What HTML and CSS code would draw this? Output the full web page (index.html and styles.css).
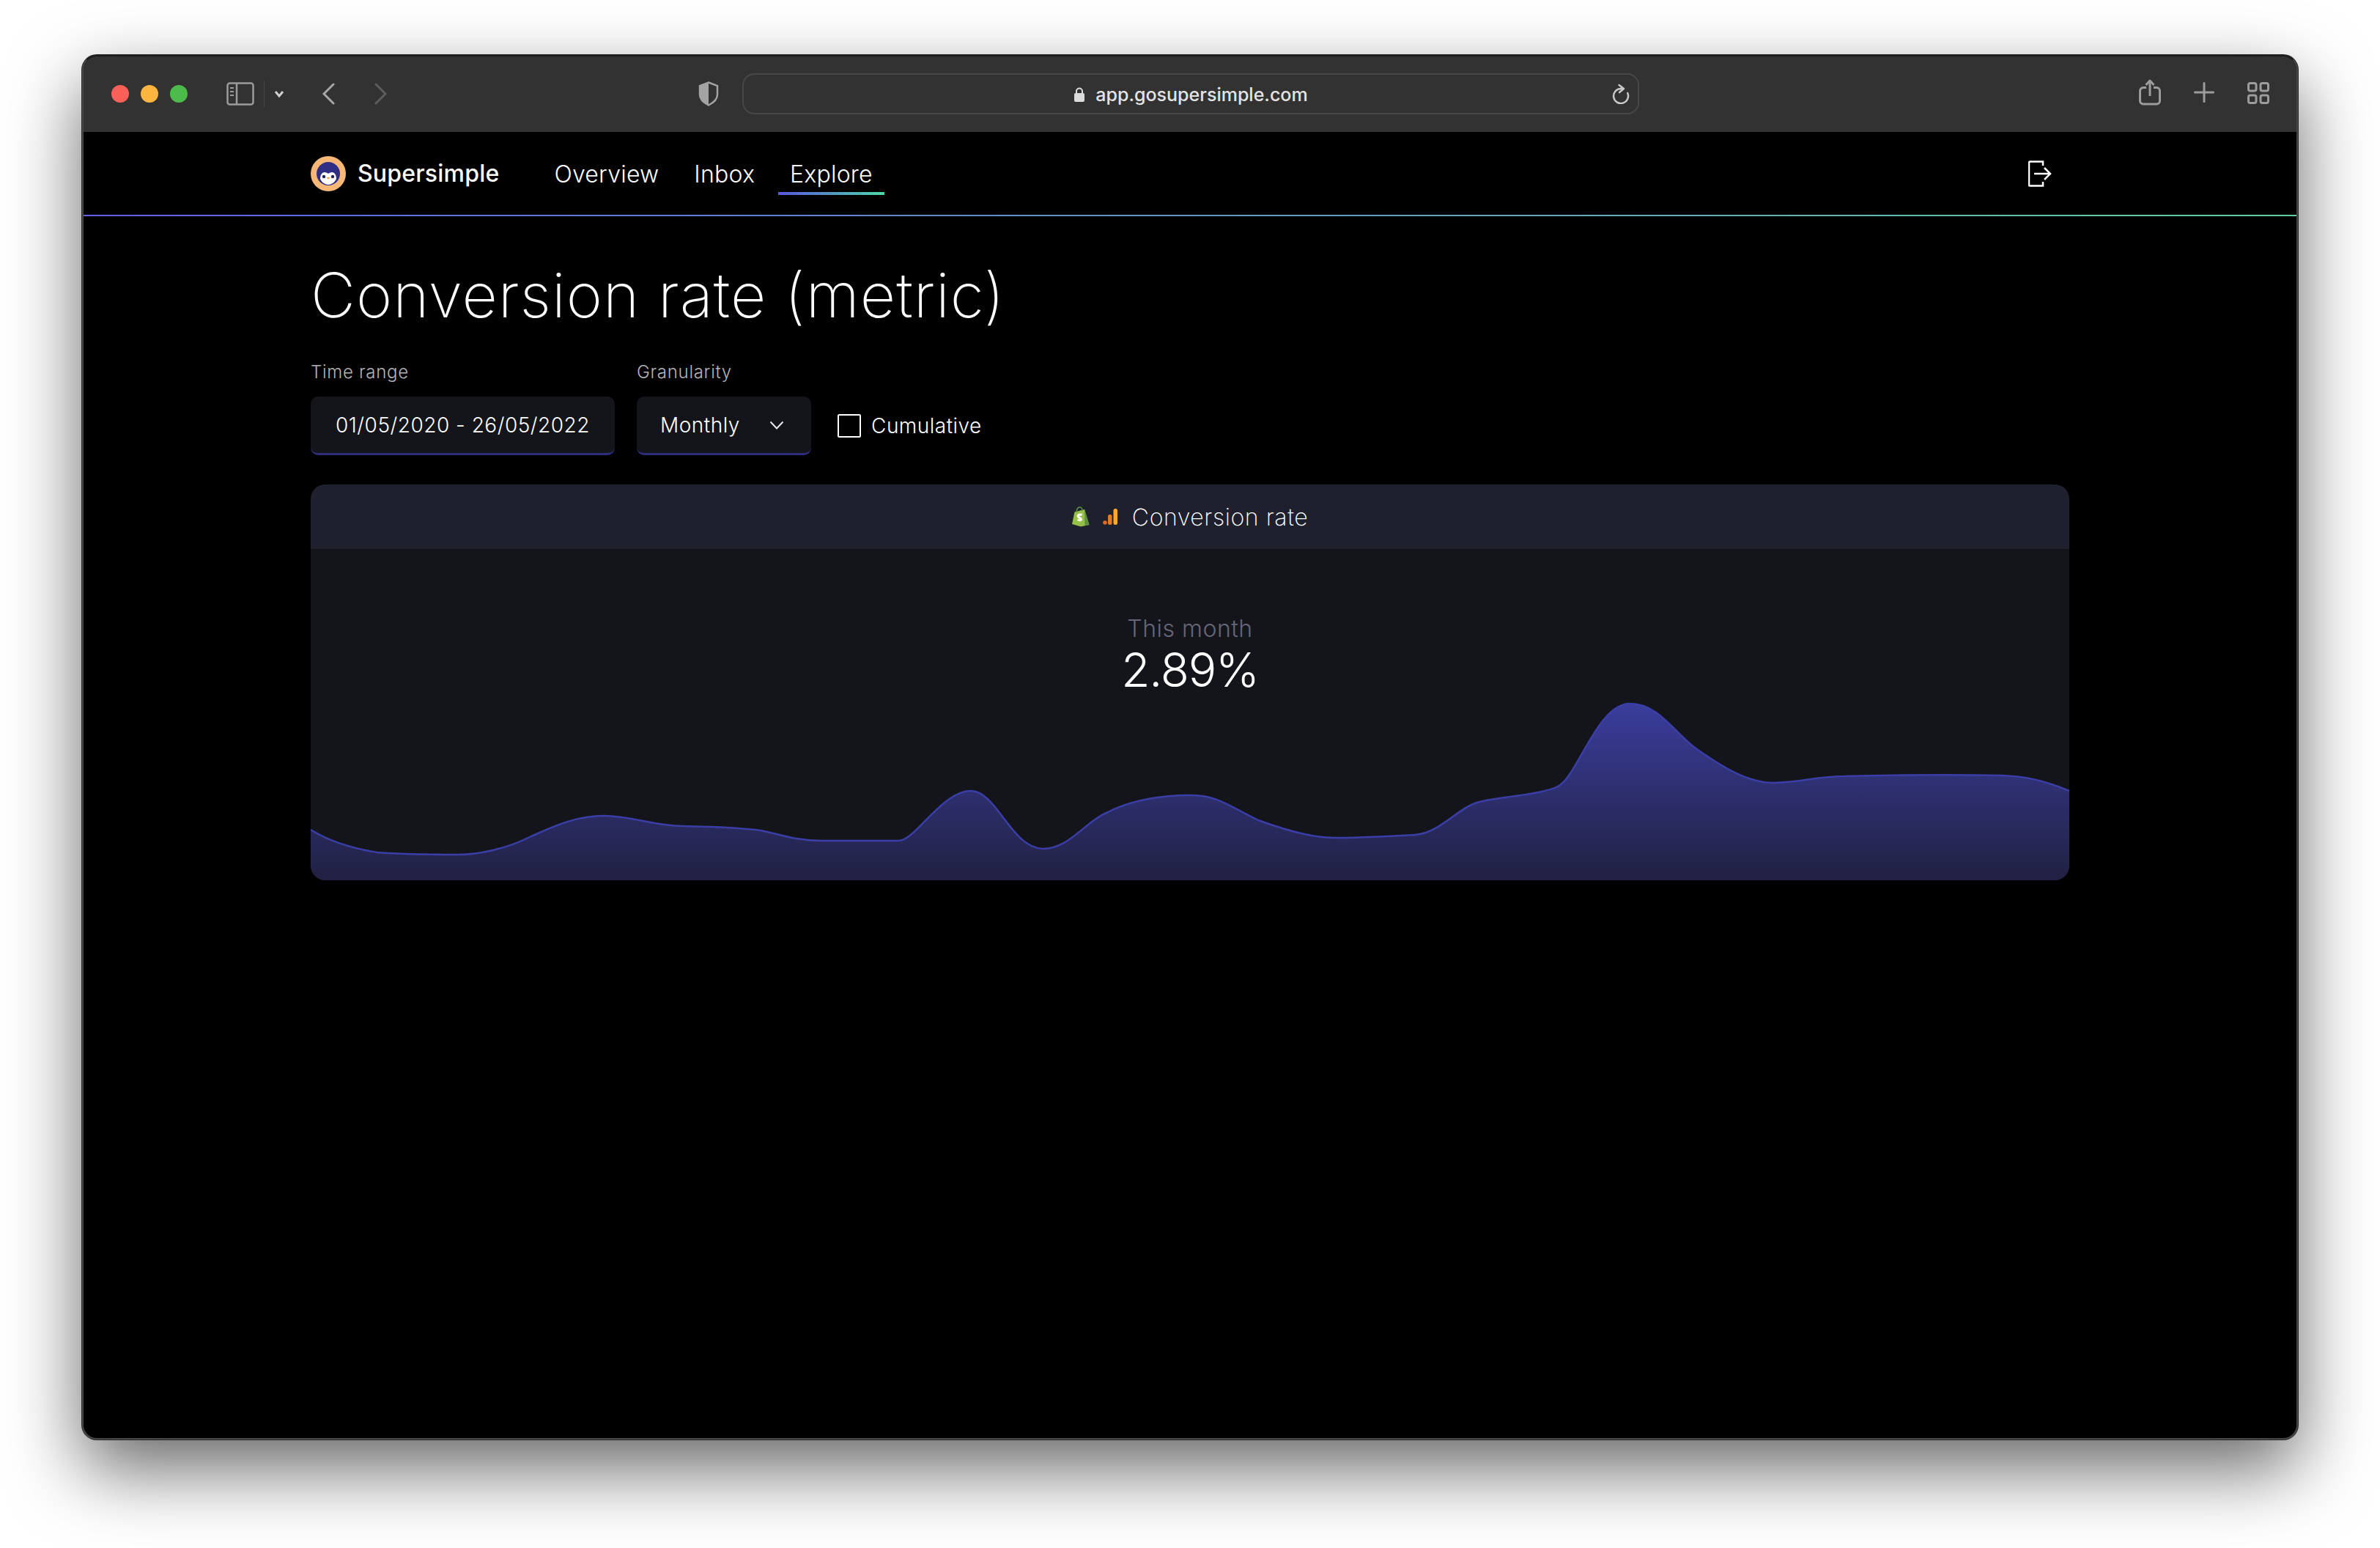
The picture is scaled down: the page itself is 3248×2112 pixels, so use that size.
FILE: index.html
```html
<!DOCTYPE html>
<html>
  <head>
    <meta charset="UTF-8">
    <title>Supersimple</title>
    <link rel="stylesheet" href="styles.css">
  </head>
  <body>
    <div class="window">
      <!-- browser chrome -->
      <div class="toolbar">
        <span class="dot dot-red"></span>
        <span class="dot dot-yellow"></span>
        <span class="dot dot-green"></span>

        <svg class="icon-sidebar" width="38" height="32" viewBox="0 0 38 32" fill="none" stroke="#9b9b9b" stroke-width="2.5">
          <rect x="1.5" y="1.5" width="35" height="29" rx="3"/>
          <path d="M14 2v28"/>
          <path d="M5 8h5M5 13h5M5 18h5" stroke-width="2"/>
        </svg>
        <span class="toolbar-sep"></span>
        <svg class="icon-caret" width="14" height="10" viewBox="0 0 14 10" fill="none" stroke="#cfcfcf" stroke-width="3">
          <path d="M2 2l5 6 5-6"/>
        </svg>
        <svg class="icon-back" width="18" height="30" viewBox="0 0 18 30" fill="none" stroke="#a6a6a6" stroke-width="3" stroke-linecap="round">
          <path d="M16 2L3 15l13 13"/>
        </svg>
        <svg class="icon-forward" width="18" height="30" viewBox="0 0 18 30" fill="none" stroke="#5c5c5c" stroke-width="3" stroke-linecap="round">
          <path d="M2 2l13 13L2 28"/>
        </svg>
        <svg class="icon-shield" width="28" height="34" viewBox="0 0 28 34">
          <path d="M14 1.500L26 6v12c0 6-5 11-12 14.500C7 29 2 24 2 18V6z" fill="none" stroke="#a3a3a3" stroke-width="2.500"/>
          <path d="M14 1.500V32.500C7 29 2 24 2 18V6z" fill="#a3a3a3"/>
        </svg>

        <div class="urlbar">
          <div class="url">
            <svg width="16" height="22" viewBox="0 0 16 22">
              <path d="M4 10V6.500a4 4 0 0 1 8 0V10" fill="none" stroke="#dcdcdc" stroke-width="2"/>
              <rect x="1" y="9" width="14" height="12" rx="2" fill="#dcdcdc"/>
            </svg>
            <span>app.gosupersimple.com</span>
          </div>
          <svg class="icon-reload" width="24" height="28" viewBox="0 0 24 28" fill="none" stroke="#c8c8c8" stroke-width="2.500" stroke-linecap="round" stroke-linejoin="round">
            <path d="M12 7A10 10 0 1 0 21.200 13"/>
            <path d="M12 7h3M9.500 2l6.500 5-6 5"/>
          </svg>
        </div>

        <div class="toolbar-right">
          <svg class="icon-share" width="30" height="36" viewBox="0 0 30 36" fill="none" stroke="#9c9c9c" stroke-width="3" stroke-linejoin="round">
            <path d="M10 11.500H6a4.500 4.500 0 0 0-4.500 4.500v13.500A4.500 4.500 0 0 0 6 34h18a4.500 4.500 0 0 0 4.500-4.500V16a4.500 4.500 0 0 0-4.500-4.500h-4"/>
            <path d="M15 23V2M9.500 8L15 2l5.500 6"/>
          </svg>
          <svg class="icon-plus" width="28" height="28" viewBox="0 0 28 28" stroke="#9c9c9c" stroke-width="3" stroke-linecap="round">
            <path d="M14 1.500v25M1.500 14h25"/>
          </svg>
          <svg class="icon-tabs" width="30" height="30" viewBox="0 0 30 30" fill="none" stroke="#9c9c9c" stroke-width="3">
            <rect x="1.500" y="1.500" width="10.500" height="10.500" rx="2.500"/>
            <rect x="18" y="1.500" width="10.500" height="10.500" rx="2.500"/>
            <rect x="1.500" y="18" width="10.500" height="10.500" rx="2.500"/>
            <rect x="18" y="18" width="10.500" height="10.500" rx="2.500"/>
          </svg>
        </div>
      </div>

      <!-- app nav -->
      <nav class="nav">
        <div class="nav-inner">
          <svg class="logo" width="48" height="48" viewBox="0 0 48 48">
            <circle cx="24" cy="24" r="24" fill="#f7b877"/>
            <circle cx="24" cy="24" r="16" fill="#2f2f86"/>
            <path d="M13 31c0-6 3-9 6-9 2 0 4 1 5 2 1-1 3-2 5-2 3 0 6 3 6 9-2 5-7 8-11 8s-9-3-11-8z" fill="#fff"/>
            <circle cx="18" cy="28" r="2.200" fill="#23235e"/>
            <circle cx="30" cy="28" r="2.200" fill="#23235e"/>
            <path d="M21.500 29h5L24 32z" fill="#f2a33a"/>
          </svg>
          <span class="brand">Supersimple</span>
          <a class="nav-link">Overview</a>
          <a class="nav-link">Inbox</a>
          <a class="nav-link active">Explore</a>
          <svg class="logout" width="32" height="36" viewBox="0 0 32 36" fill="none" stroke="#fff" stroke-width="2.500">
            <path d="M20 7V1.500H2a1 1 0 0 0-1 1v31a1 1 0 0 0 1 1h18V29"/>
            <path d="M8 18h22M22 10l8 8-8 8"/>
          </svg>
        </div>
      </nav>

      <main class="content">
        <h1>Conversion rate (metric)</h1>

        <div class="filters">
          <div class="field">
            <label>Time range</label>
            <div class="control control-date">01/05/2020 - 26/05/2022</div>
          </div>
          <div class="field">
            <label>Granularity</label>
            <div class="control control-select">
              Monthly
              <svg width="20" height="12" viewBox="0 0 20 12" fill="none" stroke="#e8e8e8" stroke-width="2">
                <path d="M1.500 1.500l8.500 9 8.500-9"/>
              </svg>
            </div>
          </div>
          <div class="check">
            <span class="checkbox"></span>
            <span>Cumulative</span>
          </div>
        </div>

        <section class="card">
          <div class="card-head">
            <svg class="icon-shopify" width="26" height="28" viewBox="0 0 26 28">
              <path d="M1 24L4.500 7.500 18 4l6.500 21-11.500 2.500z" fill="#95bf47"/>
              <path d="M18 4l6.500 21-6 1.300z" fill="#5e8e3e"/>
              <path d="M7 8c0-4 2-7 4.500-7S15 3 15 6" fill="none" stroke="#5e8e3e" stroke-width="1.500"/>
              <path d="M14.500 11.500c-3-1.300-5.500-.3-5.500 1.500 0 2.500 4.500 2.500 4.500 4.500 0 1.500-2.500 1.700-5 .5" fill="none" stroke="#fff" stroke-width="3"/>
            </svg>
            <svg class="icon-analytics" width="20" height="22" viewBox="0 0 20 22">
              <circle cx="3" cy="19" r="2.800" fill="#e06a1f"/>
              <rect x="7" y="8" width="5.500" height="14" rx="2.500" fill="#e37b25"/>
              <rect x="14.500" y="0" width="5.500" height="22" rx="2.500" fill="#f9ab2e"/>
            </svg>
            <span>Conversion rate</span>
          </div>
          <div class="stat">
            <div class="stat-label">This month</div>
            <div class="stat-value">2.89%</div>
          </div>
          <svg class="chart" width="2400" height="260" viewBox="424 940 2400 260">
            <defs>
              <linearGradient id="area" gradientUnits="userSpaceOnUse" x1="0" y1="959" x2="0" y2="1200">
                <stop offset="0" stop-color="#3a3d9c"/>
                <stop offset="1" stop-color="#212142"/>
              </linearGradient>
            </defs>
            <path fill="url(#area)" d="M424 1131 C448 1146 478 1156 515 1162 C540 1164 600 1165 626 1165 C650 1165 690 1158 725 1140 C755 1127 785 1112 824 1112 C860 1112 890 1125 930 1126 C960 1127 1000 1127 1038 1132 C1065 1137 1085 1146 1120 1146 L1226 1146 C1250 1146 1285 1078 1325 1078 C1360 1078 1380 1156 1423 1157 C1460 1157 1480 1120 1512 1107 C1545 1090 1590 1083 1628 1084 C1660 1084 1680 1100 1717 1118 C1750 1130 1790 1142 1819 1142 C1860 1142 1910 1139 1931 1138 C1965 1136 1990 1100 2019 1093 C2040 1087 2105 1083 2126 1072 C2152 1060 2180 959 2224 959 C2265 959 2285 1000 2317 1022 C2350 1045 2385 1067 2420 1067 C2455 1067 2480 1058 2517 1058 C2600 1056 2680 1056 2731 1057 C2765 1058 2790 1064 2824 1078 L2824 1200 L424 1200 Z"/>
            <path fill="none" stroke="#3b3ea6" stroke-width="2.500" d="M424 1131 C448 1146 478 1156 515 1162 C540 1164 600 1165 626 1165 C650 1165 690 1158 725 1140 C755 1127 785 1112 824 1112 C860 1112 890 1125 930 1126 C960 1127 1000 1127 1038 1132 C1065 1137 1085 1146 1120 1146 L1226 1146 C1250 1146 1285 1078 1325 1078 C1360 1078 1380 1156 1423 1157 C1460 1157 1480 1120 1512 1107 C1545 1090 1590 1083 1628 1084 C1660 1084 1680 1100 1717 1118 C1750 1130 1790 1142 1819 1142 C1860 1142 1910 1139 1931 1138 C1965 1136 1990 1100 2019 1093 C2040 1087 2105 1083 2126 1072 C2152 1060 2180 959 2224 959 C2265 959 2285 1000 2317 1022 C2350 1045 2385 1067 2420 1067 C2455 1067 2480 1058 2517 1058 C2600 1056 2680 1056 2731 1057 C2765 1058 2790 1064 2824 1078"/>
          </svg>
        </section>
      </main>
    </div>
  </body>
</html>
```

FILE: styles.css
```css
html, body {
  margin: 0;
  background: #fff;
}

body {
  width: 3248px;
  height: 2112px;
  padding: 75px 112px 0;
  box-sizing: border-box;
  overflow: hidden;
  font-family: Inter, "Noto Sans", sans-serif;
  color: #fff;
}

.window {
  width: 3024px;
  height: 1889px;
  box-sizing: border-box;
  background: #000;
  border-radius: 20px;
  border: 2px solid #474747;
  border-top-color: #1c1c1c;
  overflow: hidden;
  box-shadow: 0 0 0 1px #2a2a2a, 0 40px 100px rgba(0, 0, 0, 0.6);
}

/* Browser toolbar */
.toolbar {
  height: 103px;
  background: #323232;
  display: flex;
  align-items: center;
  padding-left: 38px;
  padding-bottom: 2px;
  box-sizing: border-box;
}

.dot {
  width: 24px;
  height: 24px;
  border-radius: 50%;
  margin-right: 16px;
}

.dot-red { background: #f96057; }
.dot-yellow { background: #fcb63f; }
.dot-green { background: #4cbb4a; margin-right: 0; }

.icon-sidebar { margin-left: 53px; }

.toolbar-sep {
  width: 1px;
  height: 36px;
  background: #454545;
  margin-left: 13px;
}

.icon-caret { margin-left: 13px; }
.icon-back { margin-left: 51px; }
.icon-forward { margin-left: 54px; }
.icon-shield { margin-left: 424px; }

.urlbar {
  width: 1224px;
  height: 56px;
  margin-left: 32px;
  box-sizing: border-box;
  border: 2px solid #474747;
  border-radius: 16px;
  display: flex;
  align-items: center;
  position: relative;
}

.url {
  flex: 1;
  display: flex;
  align-items: center;
  justify-content: center;
  gap: 14px;
  padding-top: 3px;
  font-size: 25px;
  font-weight: 500;
  color: #e4e4e4;
}

.icon-reload {
  position: absolute;
  right: 11px;
  top: 12px;
}

.toolbar-right {
  margin-left: auto;
  margin-right: 37px;
  display: flex;
  align-items: center;
  gap: 45px;
}

.icon-share { margin-bottom: 3px; }
.icon-plus { margin-bottom: 3px; }
.icon-tabs { margin-bottom: 1px; }

/* App nav */
.nav {
  height: 115px;
  box-sizing: border-box;
  border-bottom: 2px solid;
  border-image: linear-gradient(90deg, #6060e8, #62cda0) 1;
}

.nav-inner {
  width: 2400px;
  height: 113px;
  margin: 0 auto;
  display: flex;
  align-items: center;
}

.brand {
  margin-left: 16px;
  margin-right: 59px;
  font-size: 32px;
  font-weight: 500;
  letter-spacing: 0.2px;
}

.nav-link {
  padding: 0 16px;
  margin-right: 16px;
  height: 56px;
  line-height: 56px;
  font-size: 32px;
  font-weight: 300;
  letter-spacing: 0.2px;
  position: relative;
  top: 1px;
}

.nav-link.active::after {
  content: "";
  position: absolute;
  left: 0;
  right: 0;
  bottom: 0;
  height: 4px;
  background: linear-gradient(90deg, #5757e0, #4fd8a8);
}

.logout {
  margin-left: auto;
  margin-right: 24px;
}

/* Page content */
.content {
  width: 2400px;
  margin: 0 auto;
}

h1 {
  margin: 0;
  padding-top: 56px;
  font-size: 84px;
  line-height: 104px;
  font-weight: 200;
  letter-spacing: 1px;
}

.filters {
  display: flex;
  align-items: flex-end;
  gap: 30px;
  margin-top: 38px;
}

.field label {
  display: block;
  font-size: 24px;
  line-height: 30px;
  font-weight: 300;
  letter-spacing: 0.7px;
  color: #b4b4b8;
  margin-bottom: 18px;
}

.control {
  height: 80px;
  box-sizing: border-box;
  background: #14151a;
  border-bottom: 3px solid #2d2f7c;
  border-radius: 10px;
  font-size: 28px;
  font-weight: 300;
  letter-spacing: 0.5px;
  display: flex;
  align-items: center;
}

.control-date {
  width: 415px;
  justify-content: center;
}

.control-select {
  width: 238px;
  padding: 0 37px 0 32px;
  justify-content: space-between;
}

.check {
  height: 80px;
  margin-left: 6px;
  display: flex;
  align-items: center;
  gap: 14px;
  font-size: 28px;
  font-weight: 300;
  letter-spacing: 0.5px;
}

.checkbox {
  width: 32px;
  height: 32px;
  box-sizing: border-box;
  border: 2px solid #fff;
  border-radius: 2px;
}

/* Metric card */
.card {
  margin-top: 40px;
  background: #14151a;
  border-radius: 20px;
  overflow: hidden;
}

.card-head {
  height: 88px;
  background: #1f202e;
  display: flex;
  align-items: center;
  justify-content: center;
  padding-right: 1px;
  font-size: 32px;
  font-weight: 200;
  letter-spacing: 0.6px;
}

.icon-analytics { margin-left: 17px; }
.card-head span { margin-left: 20px; }

.stat {
  height: 192px;
  box-sizing: border-box;
  padding-top: 89px;
  text-align: center;
}

.stat-label {
  font-size: 32px;
  line-height: 40px;
  font-weight: 300;
  letter-spacing: 0.5px;
  color: #65667a;
}

.stat-value {
  font-size: 64px;
  line-height: 72px;
  font-weight: 300;
  letter-spacing: -1.2px;
}

.chart {
  display: block;
}
```
